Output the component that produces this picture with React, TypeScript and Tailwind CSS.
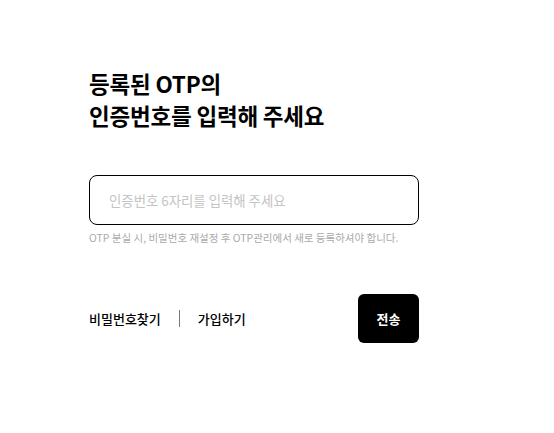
export default function App() {
  return (
    <main
      className="min-h-screen bg-white px-[89px] pt-[67px] text-black"
      style={{ fontFamily: '"Noto Sans CJK KR", "Noto Sans", sans-serif' }}
    >
      <div className="w-[330px]">
        <h1 className="text-[22.5px] font-bold leading-[32px] tracking-[-0.2px]">
          등록된 OTP의
          <br />
          인증번호를 입력해 주세요
        </h1>

        <div className="mt-[44px]">
          <input
            type="text"
            placeholder="인증번호 6자리를 입력해 주세요"
            className="h-[50px] w-full rounded-[8px] border border-black px-[19px] text-[13.4px] outline-none placeholder:text-[#c4c4c4]"
          />
          <p className="mt-[5px] text-[10.5px] text-[#aaaaaa]">
            OTP 분실 시, 비밀번호 재설정 후 OTP관리에서 새로 등록하셔야 합니다.
          </p>
        </div>

        <div className="mt-[48px] flex items-center justify-between">
          <div className="flex items-center text-[13px] font-medium">
            <a href="#">비밀번호찾기</a>
            <span className="mx-[18px] h-[17px] w-px bg-[#777]" />
            <a href="#">가입하기</a>
          </div>
          <button className="h-[49px] w-[61px] rounded-[6px] bg-black text-[13px] font-bold text-white">
            전송
          </button>
        </div>
      </div>
    </main>
  );
}
